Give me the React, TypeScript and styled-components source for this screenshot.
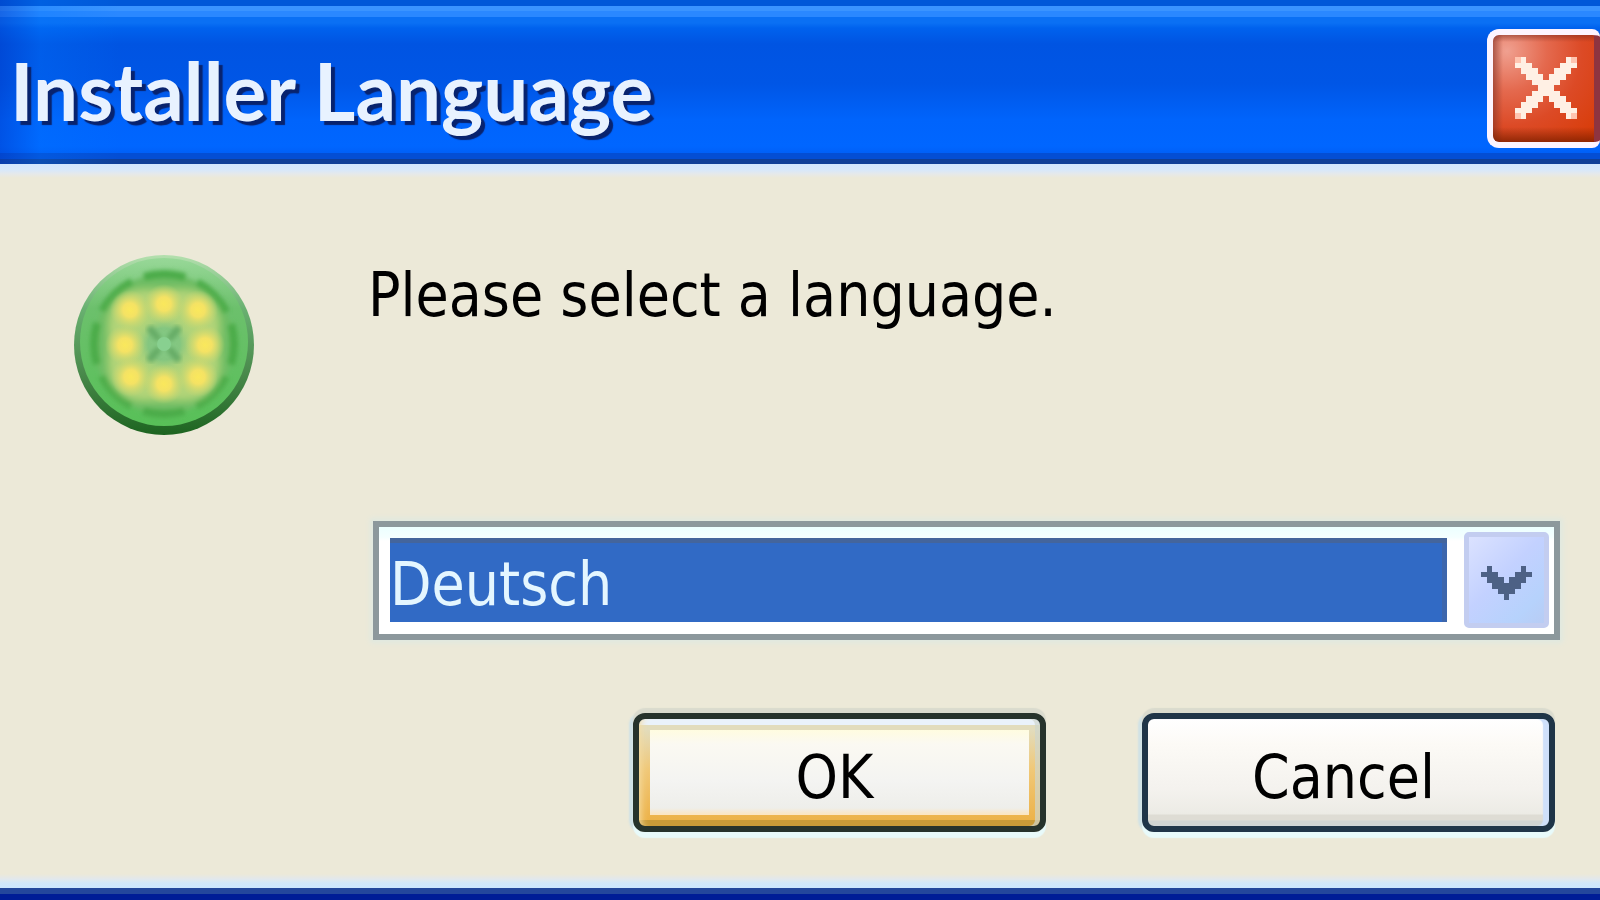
import React, { useState } from 'react';
import styled, { createGlobalStyle } from 'styled-components';

const GlobalStyle = createGlobalStyle`
  * { box-sizing: border-box; }
  body { margin: 0; background: #ece9d8; }
`;

const uiFont = '"DejaVu Sans Condensed", "DejaVu Sans", sans-serif';

const Dialog = styled.main`
  display: flex;
  flex-direction: column;
  min-height: 100vh;
  overflow: hidden;
  background: #ece9d8;
  color: #000;
  font: 60px/70px ${uiFont};
`;

const TitleBar = styled.header`
  display: flex;
  align-items: center;
  justify-content: space-between;
  height: 164px;
  flex: none;
  padding: 12px 0 0 10px;
  background:
    linear-gradient(90deg, rgba(0, 60, 200, 0.45) 0, rgba(0, 120, 255, 0.25) 40px, rgba(0, 100, 255, 0) 120px),
    linear-gradient(
      180deg,
      #0058d8 0, #0058d8 6px,
      #3a94ff 6px, #3a94ff 11px,
      #2a88ff 11px, #2a88ff 17px,
      #0a70f4 17px, #0a70f4 23px,
      #0062ee 28px, #0054e2 44px, #0056e6 84px,
      #0064fc 120px, #0066ff 146px, #0060f8 153px,
      #044ed4 153px, #044ed4 159px,
      #103f98 159px
    );
`;

const Title = styled.h1`
  margin: 0;
  padding-top: 4px;
  color: #e8f2ff;
  font: 700 80px/96px Lato, sans-serif;
  text-shadow: 4px 4px 1px #08236e;
  white-space: nowrap;
`;

const CloseButton = styled.button`
  flex: none;
  display: flex;
  align-items: center;
  width: 113px;
  height: 119px;
  padding: 0 0 0 22px;
  border: 6px solid #fdf4ff;
  border-right: 0;
  border-radius: 12px 8px 8px 12px;
  background:
    linear-gradient(270deg, #8e3440 0, #8e3440 6px, rgba(142, 52, 64, 0) 6px),
    linear-gradient(180deg, rgba(120, 40, 30, 0.5) 0, rgba(120, 40, 30, 0) 7px, rgba(120, 30, 0, 0) 92px, rgba(120, 30, 0, 0.75) 107px),
    linear-gradient(90deg, rgba(130, 50, 40, 0.6) 0, rgba(130, 50, 40, 0) 10px),
    radial-gradient(circle at 14px 16px, #f0a090 0, #e4694e 40px, #dc4a26 75px, #d83c08 120px);
`;

const Body = styled.section`
  flex: 1;
  display: grid;
  grid-template-columns: 180px minmax(0, 1fr);
  column-gap: 114px;
  align-items: start;
  padding: 90px 40px 56px 74px;
  background:
    linear-gradient(180deg, #d2e6fe 0, #d8e8fa 6px, #e6e9ea 10px, rgba(236, 233, 216, 0) 14px),
    linear-gradient(0deg, #cde6ff 0, #d2e6fa 5px, #e2e8ec 9px, rgba(236, 233, 216, 0) 14px),
    #ece9d8;
`;

const BottomEdge = styled.footer`
  flex: none;
  height: 12px;
  border-top: 6px solid #24469c;
  background: #001c96;
`;

const Form = styled.form`
  display: flex;
  flex-direction: column;
  padding-top: 6px;
`;

const Prompt = styled.label`
  white-space: nowrap;
`;

const Controls = styled.div`
  display: flex;
  flex-direction: column;
  gap: 73px;
  padding: 191px 0 0 5px;
`;

const Combo = styled.div`
  display: flex;
  align-items: center;
  gap: 17px;
  height: 119px;
  padding: 0 5px 1px 11px;
  border: 6px solid #8c989c;
  background: linear-gradient(180deg, #ecffff 0, #f4ffff 10px, #fff 14px);
  box-shadow: 0 0 5px 3px #e0e9e0;
`;

const LanguageSelect = styled.select`
  appearance: none;
  flex: 1;
  min-width: 0;
  height: 84px;
  margin: 0;
  padding: 8px 0 0 0;
  border: 0;
  border-radius: 0;
  outline: 0;
  background: #316ac5;
  box-shadow: inset 0 5px 0 #44659c, inset -5px 0 0 #3d66ac;
  color: #e4f6ff;
  font: 60px/70px ${uiFont};
`;

const DropMark = styled.span`
  display: flex;
  align-items: center;
  justify-content: center;
  flex: none;
  width: 85px;
  height: 96px;
  padding-top: 6px;
  border: 5px solid #c3cdf0;
  border-radius: 5px;
  background: linear-gradient(135deg, #dbe2ff 0, #c3d1ff 45%, #b6d2fc 80%, #b8ccf4 100%);
  pointer-events: none;
`;

const Actions = styled.div`
  display: flex;
  justify-content: flex-end;
  gap: 96px;
  padding-right: 5px;
`;

const ActionButton = styled.button<{ $default?: boolean }>`
  flex: 0 1 413px;
  min-width: 0;
  height: 119px;
  padding: 8px 10px 0 0;
  border: 6px solid ${(p) => (p.$default ? '#26332c' : '#1f3548')};
  border-radius: 12px;
  color: #000;
  font: 60px/70px ${uiFont};
  background: ${(p) =>
    p.$default
      ? `linear-gradient(180deg, #fffce0 0, #fbf9f2 14px, #f4f4f2 50px, #eeeeea 78px, #fbe6c4 84px) 11px 11px / calc(100% - 22px) 85px no-repeat,
         linear-gradient(180deg, #eaf2fa 0, #eaf2fa 6px, rgba(0, 0, 0, 0) 6px, rgba(0, 0, 0, 0) 101px, #c99b38 101px),
         linear-gradient(180deg, #e2dcbc 0, #e2dcbc 11px, #f0c878 50px, #ecb044 100%)`
      : 'linear-gradient(180deg, #fff 0, #fcfaf6 25px, #f4f2ee 70px, #ecebe5 95px, #dedcd4 96px, #dedcd4 101px, #d0d4d2 102px)'};
  box-shadow: 0 6px 1px #e8fafa, 0 -5px 1px #dadbce, -4px 0 2px #d0e2e6${(p) =>
    p.$default
      ? ', inset 11px 0 7px -9px #f4dca4, inset -5px 0 0 rgba(206, 214, 204, 0.7)'
      : ', inset -6px 0 1px #cfe0fa'};
`;

const CloseGlyph = () => (
  <svg width="62" height="62" viewBox="0 0 11 11" shapeRendering="crispEdges" aria-hidden="true">
    <path
      fill="#fff0e4"
      d="M0 0h2v1h-2zM9 0h2v1h-2zM0 1h3v1h-3zM8 1h3v1h-3zM1 2h3v1h-3zM7 2h3v1h-3zM2 3h3v1h-3zM6 3h3v1h-3zM3 4h5v1h-5zM4 5h3v1h-3zM3 6h5v1h-5zM2 7h3v1h-3zM6 7h3v1h-3zM1 8h3v1h-3zM7 8h3v1h-3zM0 9h3v1h-3zM8 9h3v1h-3zM0 10h2v1h-2zM9 10h2v1h-2z"
    />
    <path fill="#ffc4b0" d="M0 0h1v1h-1zM10 0h1v1h-1zM0 10h1v1h-1zM10 10h1v1h-1z" />
  </svg>
);

const ChevronGlyph = () => (
  <svg width="51" height="34" viewBox="0 0 9 6" shapeRendering="crispEdges" aria-hidden="true">
    <path
      fill="#4d6185"
      d="M1 0h1v1h-1zM7 0h1v1h-1zM0 1h3v1h-3zM6 1h3v1h-3zM1 2h3v1h-3zM5 2h3v1h-3zM2 3h5v1h-5zM3 4h3v1h-3zM4 5h1v1h-1z"
    />
  </svg>
);

const seeds = [
  [56, 56], [90, 50], [124, 56],
  [51, 91], [131, 91],
  [57, 123], [90, 130], [124, 123],
];

const AppIcon = () => (
  <svg width="180" height="182" viewBox="0 0 180 182" role="img" aria-label="Installer">
    <defs>
      <linearGradient id="rim" x1="0" y1="0" x2="0" y2="1">
        <stop offset="0" stopColor="#b4e0ae" />
        <stop offset="0.3" stopColor="#68b070" />
        <stop offset="0.65" stopColor="#4a8a4c" />
        <stop offset="1" stopColor="#1d6420" />
      </linearGradient>
      <linearGradient id="skin" x1="0" y1="0" x2="0" y2="1">
        <stop offset="0" stopColor="#98d898" />
        <stop offset="0.3" stopColor="#6cc06c" />
        <stop offset="1" stopColor="#58c058" />
      </linearGradient>
      <radialGradient id="core">
        <stop offset="0" stopColor="#84cc88" />
        <stop offset="0.5" stopColor="#84c680" />
        <stop offset="1" stopColor="#b0d47c" stopOpacity="0" />
      </radialGradient>
      <radialGradient id="seed">
        <stop offset="0" stopColor="#fae85c" />
        <stop offset="0.35" stopColor="#f4e264" />
        <stop offset="1" stopColor="#d0d870" stopOpacity="0" />
      </radialGradient>
      <filter id="soft" x="-20%" y="-20%" width="140%" height="140%">
        <feGaussianBlur stdDeviation="4" />
      </filter>
      <filter id="edge" x="-20%" y="-20%" width="140%" height="140%">
        <feGaussianBlur stdDeviation="2" />
      </filter>
    </defs>
    <circle cx="90" cy="91" r="90" fill="url(#rim)" />
    <circle cx="90" cy="88" r="84" fill="url(#skin)" />
    <circle cx="90" cy="90" r="70" fill="#6cbc64" stroke="#4cac48" strokeWidth="8" strokeDasharray="42 13" strokeDashoffset="21" filter="url(#edge)" />
    <rect x="34" y="35" width="112" height="112" rx="34" fill="#b2d478" filter="url(#soft)" />
    <circle cx="90" cy="90" r="32" fill="url(#core)" />
    {seeds.map(([x, y]) => (
      <circle key={`${x}-${y}`} cx={x} cy={y} r="20" fill="url(#seed)" />
    ))}
    <path
      d="M77 76l6 7M103 76l-6 7M77 104l6-7M103 104l-6-7"
      stroke="#66ac66"
      strokeWidth="7"
      strokeLinecap="square"
      filter="url(#edge)"
    />
    <circle cx="90" cy="90" r="7" fill="#88d090" />
  </svg>
);

export default function App() {
  const [language, setLanguage] = useState('de');
  return (
    <>
      <GlobalStyle />
      <Dialog>
        <TitleBar>
          <Title>Installer Language</Title>
          <CloseButton type="button" aria-label="Close">
            <CloseGlyph />
          </CloseButton>
        </TitleBar>
        <Body>
          <AppIcon />
          <Form onSubmit={(e) => e.preventDefault()}>
            <Prompt htmlFor="language">Please select a language.</Prompt>
            <Controls>
              <Combo>
                <LanguageSelect id="language" value={language} onChange={(e) => setLanguage(e.target.value)}>
                  <option value="de">Deutsch</option>
                </LanguageSelect>
                <DropMark>
                  <ChevronGlyph />
                </DropMark>
              </Combo>
              <Actions>
                <ActionButton type="submit" $default>OK</ActionButton>
                <ActionButton type="button">Cancel</ActionButton>
              </Actions>
            </Controls>
          </Form>
        </Body>
        <BottomEdge />
      </Dialog>
    </>
  );
}
